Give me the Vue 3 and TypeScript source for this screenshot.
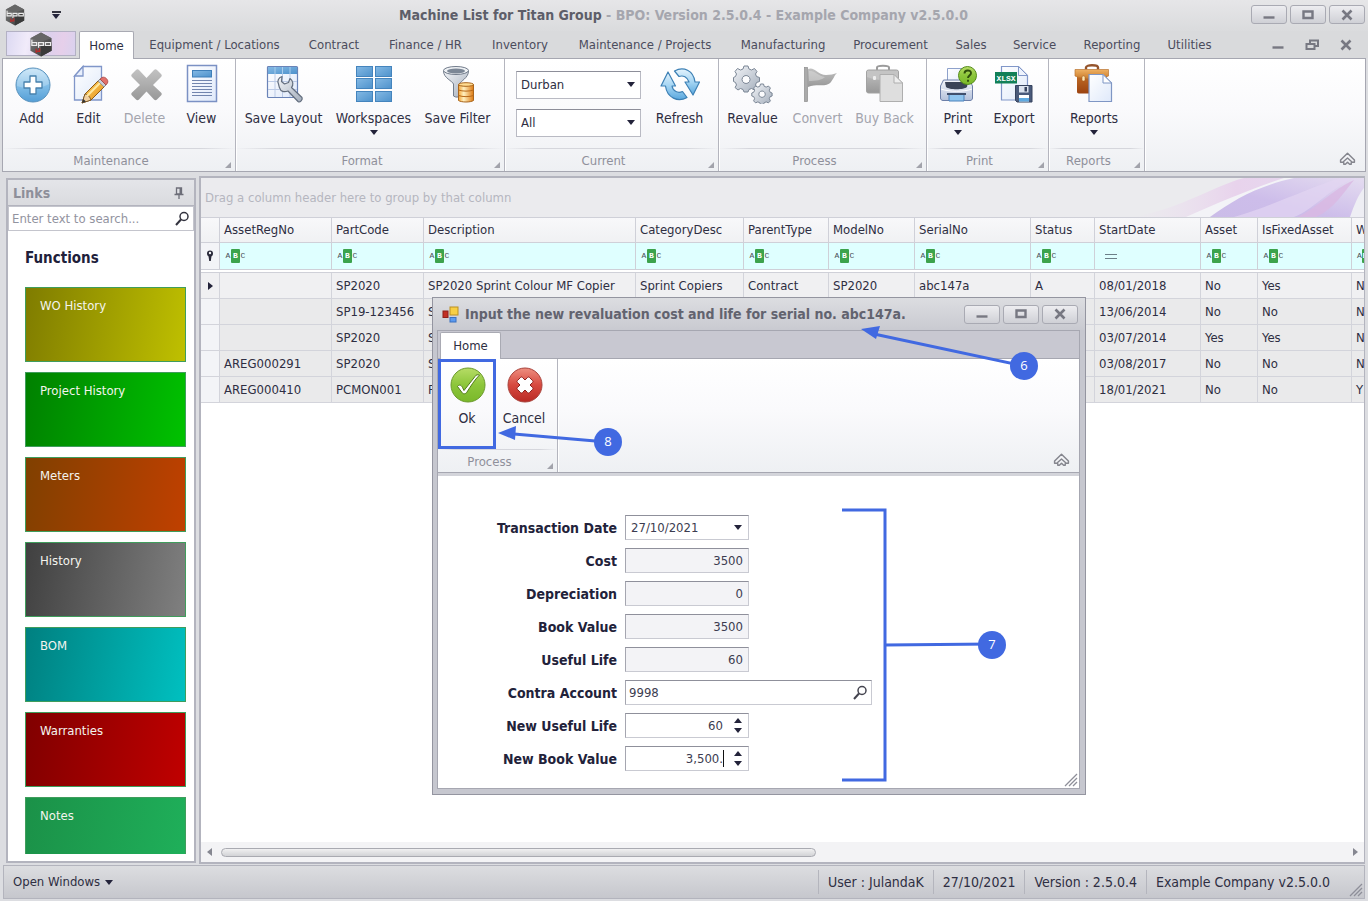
<script setup lang="ts">
import { ref } from 'vue'

interface RibbonItem { label: string; icon: string; disabled?: boolean; menu?: boolean }
interface RibbonGroup { name: string; cls: string; items: RibbonItem[]; combos?: boolean }
interface Tile { label: string; cls: string }
interface Column { key: string; title: string; cls: string; filter: 'abc' | 'eq' }
interface Field { id: string; label: string; kind: 'date' | 'readonly' | 'lookup' | 'spin'; value: string; caret?: boolean }

const tabs = ['Home', 'Equipment / Locations', 'Contract', 'Finance / HR', 'Inventory', 'Maintenance / Projects', 'Manufacturing', 'Procurement', 'Sales', 'Service', 'Reporting', 'Utilities']
const activeTab = ref('Home')

const groups: RibbonGroup[] = [
  { name: 'Maintenance', cls: 'g-maintenance', items: [
    { label: 'Add', icon: 'add' }, { label: 'Edit', icon: 'edit' },
    { label: 'Delete', icon: 'delete', disabled: true }, { label: 'View', icon: 'view' } ] },
  { name: 'Format', cls: 'g-format', items: [
    { label: 'Save Layout', icon: 'layout' }, { label: 'Workspaces', icon: 'workspaces', menu: true },
    { label: 'Save Filter', icon: 'filter' } ] },
  { name: 'Current', cls: 'g-current', combos: true, items: [{ label: 'Refresh', icon: 'refresh' }] },
  { name: 'Process', cls: 'g-process', items: [
    { label: 'Revalue', icon: 'gears' }, { label: 'Convert', icon: 'flag', disabled: true },
    { label: 'Buy Back', icon: 'buyback', disabled: true } ] },
  { name: 'Print', cls: 'g-print', items: [
    { label: 'Print', icon: 'print', menu: true }, { label: 'Export', icon: 'export' } ] },
  { name: 'Reports', cls: 'g-reports', items: [{ label: 'Reports', icon: 'reports', menu: true }] },
]

const site = ref('Durban')
const scope = ref('All')

const tiles: Tile[] = [
  { label: 'WO History', cls: 'olive' },
  { label: 'Project History', cls: 'green' },
  { label: 'Meters', cls: 'orange' },
  { label: 'History', cls: 'gray' },
  { label: 'BOM', cls: 'teal' },
  { label: 'Warranties', cls: 'red' },
  { label: 'Notes', cls: 'emerald' },
]

const columns: Column[] = [
  { key: 'reg', title: 'AssetRegNo', cls: 'c-reg', filter: 'abc' },
  { key: 'part', title: 'PartCode', cls: 'c-part', filter: 'abc' },
  { key: 'desc', title: 'Description', cls: 'c-desc', filter: 'abc' },
  { key: 'cat', title: 'CategoryDesc', cls: 'c-cat', filter: 'abc' },
  { key: 'parent', title: 'ParentType', cls: 'c-parent', filter: 'abc' },
  { key: 'model', title: 'ModelNo', cls: 'c-model', filter: 'abc' },
  { key: 'serial', title: 'SerialNo', cls: 'c-serial', filter: 'abc' },
  { key: 'status', title: 'Status', cls: 'c-status', filter: 'abc' },
  { key: 'start', title: 'StartDate', cls: 'c-start', filter: 'eq' },
  { key: 'asset', title: 'Asset', cls: 'c-asset', filter: 'abc' },
  { key: 'fixed', title: 'IsFixedAsset', cls: 'c-fixed', filter: 'abc' },
  { key: 'w', title: 'W', cls: 'c-w', filter: 'abc' },
]

const rows: Record<string, string>[] = [
  { reg: '', part: 'SP2020', desc: 'SP2020 Sprint Colour MF Copier', cat: 'Sprint Copiers', parent: 'Contract', model: 'SP2020', serial: 'abc147a', status: 'A', start: '08/01/2018', asset: 'No', fixed: 'Yes', w: 'N' },
  { reg: '', part: 'SP19-123456', desc: 'S', start: '13/06/2014', asset: 'No', fixed: 'No', w: 'N' },
  { reg: '', part: 'SP2020', desc: 'S', start: '03/07/2014', asset: 'Yes', fixed: 'Yes', w: 'N' },
  { reg: 'AREG000291', part: 'SP2020', desc: 'S', start: '03/08/2017', asset: 'No', fixed: 'No', w: 'N' },
  { reg: 'AREG000410', part: 'PCMON001', desc: 'P', start: '18/01/2021', asset: 'No', fixed: 'No', w: 'Y' },
]

const fields = ref<Field[]>([
  { id: 'date', label: 'Transaction Date', kind: 'date', value: '27/10/2021' },
  { id: 'cost', label: 'Cost', kind: 'readonly', value: '3500' },
  { id: 'depr', label: 'Depreciation', kind: 'readonly', value: '0' },
  { id: 'book', label: 'Book Value', kind: 'readonly', value: '3500' },
  { id: 'life', label: 'Useful Life', kind: 'readonly', value: '60' },
  { id: 'contra', label: 'Contra Account', kind: 'lookup', value: '9998' },
  { id: 'newlife', label: 'New Useful Life', kind: 'spin', value: '60' },
  { id: 'newbook', label: 'New Book Value', kind: 'spin', value: '3,500.', caret: true },
])

const statusItems = ['User : JulandaK', '27/10/2021', 'Version : 2.5.0.4', 'Example Company v2.5.0.0']
</script>

<template>
  <div class="app">
    <svg class="sprite" width="0" height="0" aria-hidden="true">
      <defs>
        <linearGradient id="gBlue" x1="0" y1="0" x2="0" y2="1"><stop offset="0" stop-color="#c3e2f6" /><stop offset=".5" stop-color="#83bfe8" /><stop offset="1" stop-color="#549ed6" /></linearGradient>
        <linearGradient id="gRefresh" x1="0" y1="0" x2="0" y2="1"><stop offset="0" stop-color="#e3f3fd" /><stop offset=".5" stop-color="#a5d5f3" /><stop offset="1" stop-color="#5aa8de" /></linearGradient>
        <linearGradient id="gCell" x1="0" y1="0" x2="1" y2="1"><stop offset="0" stop-color="#84b9e4" /><stop offset="1" stop-color="#4e92cc" /></linearGradient>
        <linearGradient id="gPage" x1="0" y1="0" x2="1" y2="1"><stop offset="0" stop-color="#ffffff" /><stop offset="1" stop-color="#dfe9fa" /></linearGradient>
        <linearGradient id="gGray" x1="0" y1="0" x2="0" y2="1"><stop offset="0" stop-color="#c2c2c2" /><stop offset="1" stop-color="#989898" /></linearGradient>
        <linearGradient id="gSilver" x1="0" y1="0" x2="1" y2="1"><stop offset="0" stop-color="#f3f5f8" /><stop offset="1" stop-color="#a3adbb" /></linearGradient>
        <linearGradient id="gPencil" x1="0" y1="0" x2="1" y2="1"><stop offset="0" stop-color="#ffd86b" /><stop offset="1" stop-color="#e38a12" /></linearGradient>
        <linearGradient id="gDb" x1="0" y1="0" x2="1" y2="0"><stop offset="0" stop-color="#f5a638" /><stop offset=".35" stop-color="#fff0c0" /><stop offset="1" stop-color="#dd7a12" /></linearGradient>
        <linearGradient id="gCase" x1="0" y1="0" x2="0" y2="1"><stop offset="0" stop-color="#c9762b" /><stop offset="1" stop-color="#9c4310" /></linearGradient>
        <linearGradient id="gFlap" x1="0" y1="0" x2="0" y2="1"><stop offset="0" stop-color="#efb163" /><stop offset="1" stop-color="#cb7c2c" /></linearGradient>
        <linearGradient id="gGreen" x1="0" y1="0" x2="0" y2="1"><stop offset="0" stop-color="#b7dc66" /><stop offset=".5" stop-color="#8cc63a" /><stop offset="1" stop-color="#7ab82a" /></linearGradient>
        <linearGradient id="gRed" x1="0" y1="0" x2="0" y2="1"><stop offset="0" stop-color="#ee8f80" /><stop offset=".5" stop-color="#d74a40" /><stop offset="1" stop-color="#b92a24" /></linearGradient>
        <linearGradient id="gPrinter" x1="0" y1="0" x2="0" y2="1"><stop offset="0" stop-color="#f4f6fb" /><stop offset="1" stop-color="#b4c1da" /></linearGradient>
        <linearGradient id="gHex" x1="0" y1="0" x2="1" y2="1"><stop offset="0" stop-color="#858585" /><stop offset="1" stop-color="#303030" /></linearGradient>
      </defs>

      <symbol id="i-logo" viewBox="0 0 24 26">
        <path d="M12 .5 23 6.500v13L12 25.500 1 19.500v-13z" fill="url(#gHex)" />
        <path d="M12 .5 23 6.500 12 10 1 6.500z" fill="#666" /><path d="M12 14 23 11v8.500l-11 6z" fill="#3a3a3a" />
        <g fill="none" stroke="#ececec" stroke-width="1.300"><path d="M2.500 8v6h5v-3h-5M9.500 16.500V11h5v3h-5M16.500 11H22v3h-5.500z" /></g>
        <path d="M10.500 17v3h-3M7 17.500v4" stroke="#b52a2a" stroke-width="1.500" fill="none" />
      </symbol>

      <symbol id="i-add" viewBox="0 0 40 40">
        <circle cx="21" cy="21" r="17" fill="url(#gBlue)" stroke="#5992bd" />
        <path d="M5 22a16 16 0 0 1 32-2c-9 5-22 6-32 2z" fill="#fff" opacity=".22" />
        <path d="M18 12h6v6h6v6h-6v6h-6v-6h-6v-6h6z" fill="#fff" stroke="#4781ad" stroke-width="1.300" stroke-linejoin="round" />
      </symbol>
      <symbol id="i-edit" viewBox="0 0 40 40">
        <path d="M14 2.500h18.500v33.500h-27V12z" fill="url(#gPage)" stroke="#8096c9" stroke-width="1.300" />
        <path d="M14 2.500V12H5.500z" fill="#e8effc" stroke="#8096c9" stroke-width="1.300" />
        <path d="M13 39l3-9 15-15 6 6-15 15z" fill="url(#gPencil)" stroke="#8d5b16" />
        <path d="M13 39l3-9c2.500 0 5 3 6 6z" fill="#f0cfa0" stroke="#6d4a1c" stroke-width=".8" />
        <path d="M13 39l1.300-4 2.700 2.600z" fill="#333" />
        <path d="M18 32 32 18" stroke="#ffe9a2" stroke-width="2" />
        <path d="m29 17 2-2 6 6-2 2z" fill="#c7ccd6" stroke="#7b8392" stroke-width=".7" />
        <path d="m31 15 2-1.500c3-1.500 7 2.500 5.500 5.500L37 21z" fill="#e2706a" stroke="#a4433f" stroke-width=".8" />
      </symbol>
      <symbol id="i-delete" viewBox="0 0 40 40">
        <path d="M7 10l4-4c1-1 2-1 3 0l7.500 8L29 6c1-1 2-1 3 0l4 4c1 1 1 2 0 3l-8 8 8 7.500c1 1 1 2 0 3l-4 4c-1 1-2 1-3 0l-7.500-8-7.500 8c-1 1-2 1-3 0l-4-4c-1-1-1-2 0-3l8-7.500-8-8c-1-1-1-2 0-3z" fill="url(#gGray)" />
      </symbol>
      <symbol id="i-view" viewBox="0 0 40 40">
        <rect x="5.500" y="1.500" width="29" height="36" fill="url(#gPage)" stroke="#7b91c4" stroke-width="1.500" />
        <rect x="10.500" y="6.500" width="19" height="6.500" fill="url(#gCell)" stroke="#3f7fb9" />
        <path d="M10 16.500h20M10 19.500h20M10 22.500h20M10 25.500h20M10 28.500h20M10 31.500h20" stroke="#7185ae" />
      </symbol>
      <symbol id="i-layout" viewBox="0 0 40 40">
        <rect x="3.500" y="2.500" width="30" height="31" rx="1" fill="url(#gPage)" stroke="#6a83b7" stroke-width="1.200" />
        <path d="M4 3h29v7H4z" fill="url(#gCell)" /><path d="M11 3v7M18.500 3v7M26 3v7" stroke="#a8cdec" />
        <path d="M4 17.500h29M4 25.500h29M11 10v23M18.500 10v23M26 10v23" stroke="#bccbe6" />
        <path d="M14.500 20c-1.500-3 0-6.500 3.500-7.500l-.5 5 3 2.500 4-1.500 1.500-4c3.500 2.500 3.500 6.500 1.500 9l10.500 10c1 2-2 5.500-4 4l-10-10.500c-4 1.500-7.500.5-8-2.500-1-1-1-3-1.500-4.500z" fill="url(#gSilver)" stroke="#626d7d" stroke-width="1.200" stroke-linejoin="round" />
      </symbol>
      <symbol id="i-workspaces" viewBox="0 0 40 40">
        <g fill="url(#gCell)" stroke="#4484bd"><rect x="2.500" y="2.500" width="16" height="10" /><rect x="21.500" y="2.500" width="16" height="10" /><rect x="2.500" y="14.500" width="16" height="10" /><rect x="21.500" y="14.500" width="16" height="10" /><rect x="2.500" y="27.500" width="16" height="10" /><rect x="21.500" y="27.500" width="16" height="10" /></g>
      </symbol>
      <symbol id="i-filter" viewBox="0 0 40 40">
        <path d="M5.500 7c0 7 9 10 10 13v12c2 1.500 5 1.500 6 0V20c1-3 9-6 9-13z" fill="url(#gSilver)" stroke="#727c8b" />
        <ellipse cx="18" cy="6.500" rx="12.500" ry="4" fill="#eef1f4" stroke="#727c8b" /><ellipse cx="18" cy="7" rx="9" ry="2.500" fill="#7c8796" />
        <path d="M20.500 20.500h15v16c-3 2-12 2-15 0z" fill="url(#gDb)" stroke="#a9651c" />
        <path d="M20.500 26c4 1.500 11 1.500 15 0M20.500 31.500c4 1.500 11 1.500 15 0" fill="none" stroke="#b8691a" />
        <ellipse cx="28" cy="20.500" rx="7.500" ry="1.800" fill="#ffdc91" stroke="#a9651c" />
      </symbol>
      <symbol id="i-refresh" viewBox="0 0 40 40">
        <path d="M14.500 7c9-5 19-.5 20.500 11h4.500L33 31 25 18h4c-1.500-5-6-7-10-5.500z" fill="url(#gRefresh)" stroke="#3d80b5" stroke-width="1.200" stroke-linejoin="round" />
        <path d="M27 33.500c-9 5-20 .5-21.500-11.500H1L8 8l7.500 14H12c1 5.500 6 7.500 10.500 5.500z" fill="url(#gRefresh)" stroke="#3d80b5" stroke-width="1.200" stroke-linejoin="round" />
      </symbol>
      <symbol id="i-gears" viewBox="0 0 40 40">
        <g fill="url(#gSilver)" stroke="#7b8695"><path fill-rule="evenodd" d="M11 2h4l1 3 2.500 1 3-1.500L24 7.500 22.500 10l1 2.500 3 1v4l-3 1-1 2.500 1.500 2.500-2.500 2.500-3-1.500-2.500 1-1 2.500h-4l-1-2.500-2.500-1-2.500 1.500L2 23.500 3.500 21l-1-2.500-2-1v-4l2-1 1-2.500L2 7.500 4.500 4.500 7.500 6 10 5zM13 11.500a4 4 0 1 0 .1 0z" />
        <path fill-rule="evenodd" d="M27.500 20h3l.7 2.300 2 .8 2.200-1.100 2 2-1.100 2.200.8 2 2 .8v3l-2 .7-.8 2 1.100 2.200-2 2-2.200-1-2 .8-.7 1.800h-3l-.7-1.800-2-.8-2.200 1-2-2 1-2.200-.8-2-2-.7v-3l2-.8.8-2-1-2.200 2-2 2.200 1.100 2-.8zM29 27a3.200 3.200 0 1 0 .1 0z" /></g>
      </symbol>
      <symbol id="i-flag" viewBox="0 0 40 40">
        <rect x="6.500" y="3.500" width="3" height="34" fill="#aaa" stroke="#8e8e8e" stroke-width=".7" />
        <path d="M10 5c6-3 10 6 18 6 4 0 8-1 11-2-3 3-3 5-6 9-5 6-13 1-23 5z" fill="url(#gGray)" />
        <path d="M11 7c6-1 9 5 16 6-3 3-9 4-16 4z" fill="#ddd" opacity=".5" />
      </symbol>
      <symbol id="i-buyback" viewBox="0 0 40 40">
        <path d="M12 6V3.500C12 1 24 1 24 3.500V6" fill="none" stroke="#9b9b9b" stroke-width="2" />
        <rect x="1.500" y="6" width="32" height="23" rx="2" fill="url(#gGray)" stroke="#a2a2a2" />
        <path d="M2 7h31v6c-8 4-22 4-31 0z" fill="#c4c4c4" /><rect x="8" y="12" width="3" height="4" rx="1" fill="#eee" />
        <path d="M15 10.500h14l8.500 8.500v18.500H15z" fill="#dedede" stroke="#aeaeae" /><path d="M29 10.500V19h8.500z" fill="#eee" stroke="#aeaeae" />
      </symbol>
      <symbol id="i-reports" viewBox="0 0 40 40">
        <path d="M12 5.500V3.500C12 .5 24 .5 24 3.500v2" fill="none" stroke="#94532b" stroke-width="2.400" />
        <path d="M3 7h30v20c0 2-1 2.500-2 2.500H5c-2 0-2-1-2-2.500z" fill="url(#gCase)" />
        <path d="M1 5.500h33.500V12c-7 3.500-27 3.500-33.500 0z" fill="url(#gFlap)" stroke="#b97432" stroke-width=".7" />
        <rect x="8" y="12" width="3" height="5" rx="1.300" fill="#ffe6b0" stroke="#a6672b" stroke-width=".6" />
        <path d="M15 10.500h14l8.500 8.500v18.500H15z" fill="url(#gPage)" stroke="#7f96c4" stroke-width="1.200" /><path d="M29 10.500V19h8.500z" fill="#fff" stroke="#7f96c4" />
      </symbol>
      <symbol id="i-print" viewBox="0 0 40 40">
        <path d="M9.500 4.500H29V20H9.500z" fill="url(#gPage)" stroke="#8ea1cb" />
        <path d="M2.500 22l3-6h26l3 6v12c0 1.500-1 2.500-2.500 2.500H5c-1.500 0-2.500-1-2.500-2.500z" fill="url(#gPrinter)" stroke="#6d7fa8" />
        <path d="M7 18h23l-1 5c-3 3-18 3-21 0z" fill="#3a4357" /><path d="M3 25c8 3 23 3 31 0" stroke="#fff" fill="none" />
        <path d="M11 30.500h15V37H11z" fill="#8fc5ef" stroke="#4d82bb" /><path d="M9 29h19v2H9z" fill="#40506d" />
        <circle cx="29.500" cy="11.500" r="9" fill="url(#gGreen)" stroke="#558c1a" />
        <path d="M26.500 9.500c0-4 6.500-4 6.500-.5 0 2.500-3 2.500-3 5M30 15.700v2" fill="none" stroke="#2f4f0c" stroke-width="1.900" />
      </symbol>
      <symbol id="i-export" viewBox="0 0 40 40">
        <path d="M7.500 2.500h17l9 9V36h-26z" fill="url(#gPage)" stroke="#8197c9" stroke-width="1.200" /><path d="M24.500 2.500v9h9z" fill="#eef3fd" stroke="#8197c9" />
        <rect x="1" y="8" width="22" height="11.500" fill="#128058" />
        <path d="M21.500 21.500h16.500v16.500H23l-1.500-1.500z" fill="#4a5a7a" stroke="#36435e" /><rect x="25" y="22" width="9.500" height="6.500" fill="#dce3ef" /><rect x="30.500" y="23" width="2.500" height="4.500" fill="#36435e" />
        <rect x="25" y="31" width="10" height="6.500" fill="#fff" /><path d="M25 34h10v3.500H25z" fill="#5fa9e0" />
      </symbol>
      <symbol id="i-ok" viewBox="0 0 40 40">
        <circle cx="21" cy="21" r="17" fill="url(#gGreen)" stroke="#6b9a2c" />
        <path d="M10.500 22.500c1.500-2 3.500-2 5 1l1.500 3L28 12.500c1-2 3-2 4.500-1.500-5 5-9 11.500-12.500 17-1 2-4 2.500-5 .5z" fill="#fff" stroke="#527c1a" stroke-linejoin="round" />
      </symbol>
      <symbol id="i-cancel" viewBox="0 0 40 40">
        <circle cx="21" cy="21" r="17" fill="url(#gRed)" stroke="#a8433c" />
        <path d="m13.500 16.500 3-3c.7-.7 1.500-.7 2 0l2.500 2.500 2.500-2.500c.5-.7 1.300-.7 2 0l3 3c.7.700.7 1.500 0 2L26 21l2.500 2.500c.7.500.7 1.300 0 2l-3 3c-.7.700-1.500.7-2 0L21 26l-2.500 2.500c-.5.700-1.300.7-2 0l-3-3c-.7-.7-.7-1.500 0-2L16 21l-2.500-2.500c-.7-.5-.7-1.300 0-2z" fill="#fff" stroke="#8d211d" stroke-linejoin="round" />
      </symbol>
      <symbol id="i-min" viewBox="0 0 14 12"><path d="M1.500 8.500h11" stroke="currentColor" stroke-width="2.400" /></symbol>
      <symbol id="i-max" viewBox="0 0 14 12"><path d="M2.500 2.500h9v6.500h-9z" fill="none" stroke="currentColor" stroke-width="2.400" /></symbol>
      <symbol id="i-restore" viewBox="0 0 14 12"><path d="M5 4V1.500h8V7h-2.500M1.500 5h8v5h-8z" fill="none" stroke="currentColor" stroke-width="2" /></symbol>
      <symbol id="i-close" viewBox="0 0 14 12"><path d="m2.500 1.500 9 9m0-9-9 9" stroke="currentColor" stroke-width="2.600" /></symbol>
      <symbol id="i-collapse" viewBox="0 0 16 14"><path d="M1.500 8.500 8 2l6.500 6.500v2h-2L8 6.500l-4.500 4h-2zM4.500 10.500v2h1.500L8 10.500l2 2h1.500v-2" fill="#f4f5f8" stroke="#85868e" stroke-width="1.400" stroke-linejoin="round" /></symbol>
      <symbol id="i-search" viewBox="0 0 16 16"><circle cx="10" cy="5.500" r="4" fill="none" stroke="currentColor" stroke-width="1.500" /><path d="m7 8.500-5 5.500" stroke="currentColor" stroke-width="2" /></symbol>
      <symbol id="i-grip" viewBox="0 0 14 14"><path d="M1 13 13 1M5 13l8-8M9 13l4-4" stroke="#8e8f99" stroke-width="1.300" /></symbol>
      <symbol id="i-form" viewBox="0 0 17 17">
        <rect x="8" y="1" width="8" height="8" fill="#f7cf45" stroke="#bb9023" /><rect x="1" y="5" width="5" height="6.500" fill="#c22f24" stroke="#8e211a" /><rect x="8" y="11.500" width="6" height="4.500" fill="#5b9af0" stroke="#3a70c0" />
      </symbol>
      <symbol id="i-pin" viewBox="0 0 10 12"><path d="M2.500 1h5v6h-5zM0.500 7.500h9M5 8v4" fill="none" stroke="#6d6e79" stroke-width="1.300" /><path d="M5.500 1h2v6h-2z" fill="#6d6e79" /></symbol>
    </svg>

    <header class="titlebar">
      <svg class="app-logo"><use href="#i-logo" /></svg>
      <button class="quick" aria-label="Customize Quick Access Toolbar"><span class="quick-line"></span><span class="arrow"></span></button>
      <h1 class="title">Machine List for Titan Group <span class="title-dim">- BPO: Version 2.5.0.4 - Example Company v2.5.0.0</span></h1>
      <div class="winbtns">
        <button class="winbtn" aria-label="Minimize"><svg><use href="#i-min" /></svg></button>
        <button class="winbtn" aria-label="Maximize"><svg><use href="#i-max" /></svg></button>
        <button class="winbtn" aria-label="Close"><svg><use href="#i-close" /></svg></button>
      </div>
    </header>

    <nav class="tabbar">
      <button class="appmenu" aria-label="Application menu"><svg><use href="#i-logo" /></svg></button>
      <div class="tabs">
        <button v-for="t in tabs" :key="t" class="tab" :class="{ active: t === activeTab }" @click="activeTab = t">{{ t }}</button>
      </div>
      <div class="mdibtns">
        <button aria-label="Minimize child window"><svg><use href="#i-min" /></svg></button>
        <button aria-label="Restore child window"><svg><use href="#i-restore" /></svg></button>
        <button aria-label="Close child window"><svg><use href="#i-close" /></svg></button>
      </div>
    </nav>

    <section class="ribbon">
      <div v-for="g in groups" :key="g.name" class="group" :class="g.cls">
        <div class="items">
          <div v-if="g.combos" class="combos">
            <div class="combo"><select v-model="site" aria-label="Site"><option>Durban</option></select><span class="arrow"></span></div>
            <div class="combo"><select v-model="scope" aria-label="Scope"><option>All</option></select><span class="arrow"></span></div>
          </div>
          <button v-for="i in g.items" :key="i.label" class="item" :disabled="i.disabled">
            <svg class="icon"><use :href="'#i-' + i.icon" /><text v-if="i.icon === 'export'" class="xlsx" x="12" y="17">XLSX</text></svg>
            <span>{{ i.label }}</span>
            <span v-if="i.menu" class="arrow"></span>
          </button>
        </div>
        <div class="caption">{{ g.name }}<span class="launcher"></span></div>
      </div>
      <button class="collapse" aria-label="Collapse ribbon"><svg><use href="#i-collapse" /></svg></button>
    </section>

    <main class="workspace">
      <aside class="links">
        <header class="links-head"><span>Links</span><svg class="pin"><use href="#i-pin" /></svg></header>
        <div class="search"><input type="text" placeholder="Enter text to search..." aria-label="Search links"><svg><use href="#i-search" /></svg></div>
        <h2>Functions</h2>
        <div class="tiles">
          <button v-for="t in tiles" :key="t.label" class="tile" :class="t.cls">{{ t.label }}</button>
        </div>
      </aside>

      <section class="grid-panel">
        <div class="groupby">
          <span>Drag a column header here to group by that column</span>
          <svg class="swoosh" viewBox="0 0 240 40" preserveAspectRatio="none">
            <defs>
              <linearGradient id="sw1" x1="0" y1="0" x2="1" y2="0"><stop offset="0" stop-color="#ecdff0" stop-opacity="0" /><stop offset=".6" stop-color="#e8d3ec" /><stop offset="1" stop-color="#e6d8ef" /></linearGradient>
              <linearGradient id="sw2" x1="0" y1="1" x2="1" y2="0"><stop offset="0" stop-color="#cbbce8" /><stop offset=".4" stop-color="#cdbdea" /><stop offset="1" stop-color="#e4dcf0" /></linearGradient>
            </defs>
            <path d="M10 40C60 30 90 8 120 0h60L80 40z" fill="url(#sw1)" />
            <path d="M62 40C95 25 130 10 160 0h16C145 8 112 22 86 40z" fill="#f3f3f7" />
            <path d="M86 40C110 22 135 8 170 0h70v40z" fill="url(#sw2)" />
            <path d="M110 40c40-12 70-28 106-40h14c-28 14-40 32-60 40z" fill="#e2d6f2" opacity=".7" />
            <path d="M174 40c20-10 34-28 56-38-10 12-20 30-38 38z" fill="#d9b8e2" opacity=".8" />
            <path d="M226 40c4-12 8-22 14-30v30z" fill="#eeeef4" />
          </svg>
        </div>
        <div class="table-wrap">
          <table>
            <colgroup><col class="c-ind"><col v-for="c in columns" :key="c.key" :class="c.cls"></colgroup>
            <thead>
              <tr class="head"><th></th><th v-for="c in columns" :key="c.key" scope="col">{{ c.title }}</th></tr>
              <tr class="filter">
                <td class="ind"><svg class="funnel" viewBox="0 0 8 12"><circle cx="4" cy="3.500" r="3" fill="#2a2a3a" /><circle cx="4" cy="3" r="1.200" fill="#f3f4f7" /><path d="M2.500 6h3L4.800 11H3.200z" fill="#2a2a3a" /></svg></td>
                <td v-for="c in columns" :key="c.key">
                  <span v-if="c.filter === 'abc'" class="abc"><i>A</i><b>B</b><i>C</i></span>
                  <span v-else class="eq"></span>
                </td>
              </tr>
              <tr class="gap"><td :colspan="columns.length + 1"></td></tr>
            </thead>
            <tbody>
              <tr v-for="(r, n) in rows" :key="n" :class="{ current: n === 0 }">
                <td class="ind"><span v-if="n === 0" class="pointer"></span></td>
                <td v-for="c in columns" :key="c.key">{{ r[c.key] }}</td>
              </tr>
            </tbody>
          </table>
        </div>
        <div class="hscroll"><span class="sc-left"></span><div class="track"><div class="thumb"></div></div><span class="sc-right"></span></div>
      </section>
    </main>

    <footer class="status">
      <button class="openwin">Open Windows<span class="arrow"></span></button>
      <div class="status-items"><span v-for="s in statusItems" :key="s">{{ s }}</span></div>
      <svg class="grip"><use href="#i-grip" /></svg>
    </footer>

    <div class="dialog" role="dialog" aria-labelledby="dlg-title">
      <header class="dlg-head">
        <svg class="dlg-icon"><use href="#i-form" /></svg>
        <h2 id="dlg-title">Input the new revaluation cost and life for serial no. abc147a.</h2>
        <div class="winbtns">
          <button class="winbtn" aria-label="Minimize dialog"><svg><use href="#i-min" /></svg></button>
          <button class="winbtn" aria-label="Maximize dialog"><svg><use href="#i-max" /></svg></button>
          <button class="winbtn" aria-label="Close dialog"><svg><use href="#i-close" /></svg></button>
        </div>
      </header>
      <div class="dlg-frame">
        <div class="dlg-tabs"><button class="tab active">Home</button></div>
        <section class="ribbon dlg-ribbon">
          <div class="group g-dlg">
            <div class="items">
              <button class="item marked"><svg class="icon"><use href="#i-ok" /></svg><span>Ok</span></button>
              <button class="item"><svg class="icon"><use href="#i-cancel" /></svg><span>Cancel</span></button>
            </div>
            <div class="caption">Process<span class="launcher"></span></div>
          </div>
          <button class="collapse" aria-label="Collapse dialog ribbon"><svg><use href="#i-collapse" /></svg></button>
        </section>
        <form class="form" @submit.prevent>
          <template v-for="f in fields" :key="f.id">
            <label :for="f.id">{{ f.label }}</label>
            <div class="field" :class="f.kind">
              <select v-if="f.kind === 'date'" :id="f.id" v-model="f.value"><option>27/10/2021</option></select>
              <input v-else :id="f.id" v-model="f.value" type="text" :readonly="f.kind === 'readonly'">
              <span v-if="f.kind === 'date'" class="arrow"></span>
              <button v-if="f.kind === 'lookup'" type="button" class="look" aria-label="Find account"><svg><use href="#i-search" /></svg></button>
              <span v-if="f.kind === 'spin'" class="caret" :class="{ on: f.caret }"></span>
              <div v-if="f.kind === 'spin'" class="spinner">
                <button type="button" :aria-label="'Increase ' + f.label"><span class="arrow up"></span></button>
                <button type="button" :aria-label="'Decrease ' + f.label"><span class="arrow"></span></button>
              </div>
            </div>
          </template>
        </form>
        <svg class="grip"><use href="#i-grip" /></svg>
      </div>
      <svg class="callouts" viewBox="0 0 654 498">
        <g fill="none" stroke="#4169e1" stroke-width="3">
          <path d="M592 69 442 37M175 145 82 137" />
          <path d="M410 213h43v270h-43M453 348l107-1" />
        </g>
        <g fill="#4169e1"><path d="m429 32 19-3-4 13zM66 136l18-7-1 14z" /><circle cx="592" cy="69" r="14" /><circle cx="176" cy="145" r="14" /><circle cx="560" cy="348" r="14" /></g>
        <g class="nums"><text x="592" y="73">6</text><text x="176" y="149">8</text><text x="560" y="352">7</text></g>
      </svg>
    </div>
  </div>
</template>

<style>
html, body { margin: 0; }
</style>

<style scoped>
.app, .app * { box-sizing: border-box; }
.app { position: relative; height: 100vh; display: flex; flex-direction: column; overflow: hidden; padding: 0 3px 2px; background: #dcdde1; color: #2e2e42; font: 13px/16px "DejaVu Sans Condensed", "Noto Sans", sans-serif; }
button, input, select { font: inherit; color: inherit; margin: 0; }
button { padding: 0; border: 0; background: none; }
.sprite { position: absolute; }
.arrow { display: block; width: 0; height: 0; border: 4px solid transparent; border-top: 5px solid #23233a; border-bottom: 0; }
.arrow.up { border-top: 0; border-bottom: 5px solid #23233a; }

.titlebar { flex: none; height: 31px; display: flex; align-items: center; margin: 0 -3px; padding: 0 3px 2px 5px; background: linear-gradient(#e6e6e8, #dadbdd); }
.app-logo { width: 20px; height: 22px; flex: none; }
.quick { width: 12px; margin-left: 25px; display: flex; flex-direction: column; align-items: center; gap: 1px; }
.quick-line { width: 9px; height: 2px; background: #33333f; }
.title { flex: 1; margin: 0; padding-left: 54px; text-align: center; font-size: 14px; line-height: 18px; font-weight: 700; color: #5d5e69; white-space: nowrap; }
.title-dim { color: #a5a6ae; }
.winbtns { display: flex; gap: 3px; flex: none; }
.winbtn { width: 36px; height: 19px; display: grid; place-items: center; border: 1px solid #a9aab3; border-radius: 3px; background: linear-gradient(#ededf0, #cfd0d6); color: #777882; }
.winbtn svg, .mdibtns svg { width: 14px; height: 12px; display: block; }

.tabbar { flex: none; height: 27px; display: flex; align-items: stretch; padding-left: 3px; background: #d9dadc; margin: 0 -3px; padding-right: 3px; }
.appmenu { width: 70px; height: 25px; margin-left: 3px; border: 1px solid #b3b1c4; background: linear-gradient(100deg, #dcd9f2, #f1ebfa 30%, #dcd0ec 60%, #e6cfea 80%, #d9d2ee); }
.appmenu svg { width: 24px; height: 25px; display: block; margin: 0 auto; }
.tabs { flex: 1; display: grid; grid-template-columns: 57px 159px 80px 103px 86px 164px 112px 103px 58px 69px 86px 69px; margin-left: 2px; }
.tab { text-align: center; white-space: nowrap; color: #4b4c5c; line-height: 28px; }
.tab.active { background: #fff; border: 1px solid #a9aab3; border-bottom: 0; border-radius: 2px 2px 0 0; position: relative; height: 28px; color: #2e2e42; }
.tabs .tab.active { margin-left: 1px; margin-right: 1px; }
.mdibtns { display: flex; align-items: center; gap: 20px; padding-right: 12px; color: #777882; }

.ribbon { flex: none; display: flex; height: 114px; border: 1px solid #a6a7b1; background: linear-gradient(#fff 0%, #fafafc 45%, #eef0f3 100%); margin: 0 -1px; position: relative; }
.tab.active { z-index: 1; }
.group { display: flex; flex-direction: column; border-right: 1px solid #b4b5be; box-shadow: 1px 0 0 #fff; }
.items { flex: 1; display: grid; justify-content: start; }
.g-maintenance { width: 233px; } .g-maintenance .items { grid-template-columns: 57px 57px 55px 59px; }
.g-format { width: 269px; } .g-format .items { grid-template-columns: 95px 85px 83px; }
.g-current { width: 214px; } .g-current .items { grid-template-columns: 125px 77px; padding-left: 11px; }
.g-process { width: 208px; } .g-process .items { grid-template-columns: 67px 63px 71px; }
.g-print { width: 122px; } .g-print .items { grid-template-columns: 58px 54px; padding-left: 2px; }
.g-reports { width: 96px; } .g-reports .items { grid-template-columns: 90px; }
.g-dlg { width: 120px; } .g-dlg .items { grid-template-columns: 58px 56px; }
.item { display: flex; flex-direction: column; align-items: center; padding-top: 5px; white-space: nowrap; font-size: 14px; }
.item .icon { width: 40px; height: 40px; display: block; margin-bottom: 6px; }
.item .arrow { margin-top: 4px; }
.item:disabled { color: #a3a4ad; }
.xlsx { font: 700 8px "Liberation Mono", monospace; fill: #fff; text-anchor: middle; }
.combos { display: flex; flex-direction: column; gap: 10px; padding-top: 12px; }
.combo { position: relative; }
.combo select { display: block; width: 100%; height: 28px; padding: 0 4px; border: 1px solid #b9bac3; border-top-color: #8d8e99; background: #fff; appearance: none; border-radius: 0; }
.combo .arrow, .date .arrow { position: absolute; right: 6px; top: 11px; pointer-events: none; }
.date .arrow { top: 9px; }
.caption { position: relative; height: 23px; line-height: 23px; padding-right: 16px; text-align: center; color: #8f909b; border-top: 1px solid; border-image: linear-gradient(90deg, transparent, #d5d6dc 15%, #d5d6dc 85%, transparent) 1; }
.launcher { position: absolute; right: 4px; bottom: 3px; border: 3px solid transparent; border-right-color: #a2a3ab; border-bottom-color: #a2a3ab; }
.collapse { margin: auto 9px 5px auto; width: 17px; height: 15px; }
.collapse svg { width: 17px; height: 15px; display: block; }

.workspace { flex: 1; min-height: 0; display: flex; gap: 3px; padding: 4px 0 1px 3px; }
.links { width: 190px; flex: none; margin: 2px 0 1px; display: flex; flex-direction: column; border: 2px solid #b3b4be; background: #fff; }
.links-head { flex: none; height: 26px; padding: 0 10px 0 5px; display: flex; justify-content: space-between; align-items: center; font-size: 14px; font-weight: 700; color: #8e8f9a; background: linear-gradient(#e4e5e9, #dadbdf); border-bottom: 1px solid #b3b4be; }
.pin { width: 10px; height: 12px; }
.search { flex: none; height: 25px; display: flex; align-items: center; border: 1px solid #c4c5cd; padding: 0 3px; }
.search input { flex: 1; min-width: 0; border: 0; padding: 0; background: none; outline: 0; }
.search input::placeholder { color: #9293a0; opacity: 1; }
.search svg { width: 16px; height: 16px; color: #33333f; }
.links h2 { flex: none; margin: 18px 0 20px 17px; font-size: 15px; line-height: 18px; font-weight: 700; color: #20203a; }
.tiles { flex: 1; min-height: 0; overflow: hidden; margin: 0 8px 7px 17px; display: flex; flex-direction: column; gap: 10px; }
.tile { flex: none; height: 75px; padding: 10px 14px; border: 1px solid #3f9d5c; color: #f4f4ee; display: flex; text-align: left; }
.olive { background: linear-gradient(100deg, #7f7c00, #bfc000); }
.green { background: linear-gradient(100deg, #008000, #00c200); }
.orange { background: linear-gradient(100deg, #804000, #c04000); }
.gray { background: linear-gradient(100deg, #404040, #808080); }
.teal { background: linear-gradient(100deg, #008080, #00c0c0); }
.red { background: linear-gradient(100deg, #800000, #c00000); }
.emerald { background: linear-gradient(100deg, #1b9148, #1fb05a); }

.grid-panel { flex: 1; min-width: 0; display: flex; flex-direction: column; border: 2px solid #b3b4be; border-right-width: 1px; background: #fff; }
.groupby { flex: none; height: 39px; display: flex; align-items: center; padding-left: 4px; background: #ebebee; color: #b5b6bf; position: relative; }
.swoosh { position: absolute; right: 0; top: 0; width: 240px; height: 39px; }
.table-wrap { flex: 1; min-height: 0; overflow: hidden; }
table { table-layout: fixed; width: 1173px; border-collapse: separate; border-spacing: 0; }
.c-ind { width: 19px; } .c-reg { width: 112px; } .c-part { width: 92px; } .c-desc { width: 212px; } .c-cat { width: 108px; } .c-parent { width: 85px; } .c-model { width: 86px; } .c-serial { width: 116px; } .c-status { width: 64px; } .c-start { width: 106px; } .c-asset { width: 57px; } .c-fixed { width: 94px; } .c-w { width: 22px; }
th, td { height: 26px; padding: 0 0 0 4px; text-align: left; font-weight: 400; white-space: nowrap; overflow: hidden; border-right: 1px solid #cfd0d8; border-bottom: 1px solid #cfd0d8; }
th { background: linear-gradient(#f8f8fa, #f0f1f3); border-top: 1px solid #cfd0d8; }
.filter td { background: #dfffff; height: 27px; }
.filter td.ind, td.ind { background: #f3f4f7; padding: 0; }
.gap td { height: 3px; background: #fff; border-right: 0; }
tbody td { background: #eaeaeb; border-color: #d3d4db; }
.current td { background: #f0f0f2; }
.funnel { display: block; width: 8px; height: 12px; margin: 0 auto; }
.pointer { display: block; width: 0; height: 0; margin: 0 auto; border: 4px solid transparent; border-left: 5px solid #23233a; border-right: 0; }
.abc { display: flex; align-items: center; font: 8px/14px "Liberation Mono", monospace; padding-left: 1px; color: #4a4f56; }
.abc i { font-style: normal; width: 6px; text-align: center; }
.abc b { width: 9px; text-align: center; background: #3ca34c; color: #fff; border-radius: 1px; }
.eq { display: block; width: 12px; height: 5px; margin-left: 6px; border-top: 1px solid #6c7f88; border-bottom: 1px solid #6c7f88; }
.hscroll { flex: none; height: 20px; display: flex; align-items: center; gap: 9px; padding: 0 6px; background: #f3f3f5; }
.track { flex: 1; }
.thumb { width: 53%; height: 9px; border: 1px solid #a9aab1; border-radius: 5px; background: linear-gradient(#f0f0f1, #d2d3d6); }
.sc-left, .sc-right { border: 4px solid transparent; border-right: 5px solid #868791; border-left: 0; }
.sc-right { border-right: 0; border-left: 5px solid #868791; }

.status { flex: none; height: 34px; display: flex; align-items: center; padding: 0 2px 0 9px; background: linear-gradient(#dcdde0, #c6c7cd); border: 1px solid #b3b4bd; position: relative; }
.openwin { display: flex; align-items: center; gap: 5px; }
.status-items { margin-left: auto; display: flex; margin-right: 23px; font-size: 14px; }
.status-items span { border-left: 1px solid #b4b5bd; line-height: 24px; padding: 0 9px; white-space: nowrap; }
.grip { position: absolute; right: 1px; bottom: 1px; width: 14px; height: 14px; }

.dialog { position: absolute; left: 432px; top: 297px; width: 654px; height: 498px; display: flex; flex-direction: column; padding: 0 5px 5px 4px; border: 1px solid #9495a0; background: #c6c7cf; }
.dlg-head { flex: none; height: 32px; display: flex; align-items: center; gap: 6px; margin: 0 -5px 0 -4px; padding: 0 7px 0 9px; background: linear-gradient(#dcdde1, #c9cad1); }
.dlg-icon { width: 17px; height: 17px; flex: none; }
.dlg-head h2 { flex: 1; margin: 0; font-size: 14px; line-height: 18px; font-weight: 700; color: #62636f; white-space: nowrap; }
.dlg-frame { flex: 1; min-height: 0; display: flex; flex-direction: column; background: #fff; border: 1px solid #a6a7b1; position: relative; }
.dlg-tabs { flex: none; height: 27px; display: flex; padding: 1px 0 0 2px; background: #c8c8d1; }
.dlg-tabs .tab { width: 61px; height: 27px; line-height: 26px; }
.dlg-ribbon { height: 115px; margin: 0 -1px; }
.dlg-ribbon::after { content: ""; position: absolute; left: 0; right: 0; bottom: -4px; height: 3px; background: #d3d4da; }
.marked { outline: 3px solid #4169e1; outline-offset: -3px; }
.form { display: grid; grid-template-columns: 179px 1fr; column-gap: 8px; row-gap: 8px; padding-top: 42px; align-items: center; }
.form label { text-align: right; font-size: 14px; font-weight: 700; color: #22223a; white-space: nowrap; }
.field { position: relative; width: 124px; height: 25px; display: flex; align-items: center; background: #fff; border: 1px solid #c9cad2; border-top-color: #8f909b; border-left-color: #a5a6b0; }
.field input, .field select { flex: 1; min-width: 0; width: 100%; height: 23px; padding: 0 5px; border: 0; outline: 0; background: none; appearance: none; color: #3c3c50; }
.readonly { background: #f3f3f6; }
.readonly input, .spin input { text-align: right; }
.field.lookup { width: 247px; }
.lookup input { padding: 0 3px; }
.look { width: 22px; height: 20px; color: #44444f; } .look svg { width: 16px; height: 16px; display: block; margin: 0 auto; }
.spin input { padding-right: 0; }
.caret { width: 1px; height: 17px; margin-right: 3px; }
.caret.on { background: #111; }
.spinner { width: 21px; display: flex; flex-direction: column; gap: 5px; align-items: center; }
.spinner button { display: block; height: 5px; }
.callouts { position: absolute; left: -1px; top: -1px; width: 654px; height: 498px; pointer-events: none; }
.nums { fill: #fff; font: 13px "Open Sans", sans-serif; text-anchor: middle; }
</style>
